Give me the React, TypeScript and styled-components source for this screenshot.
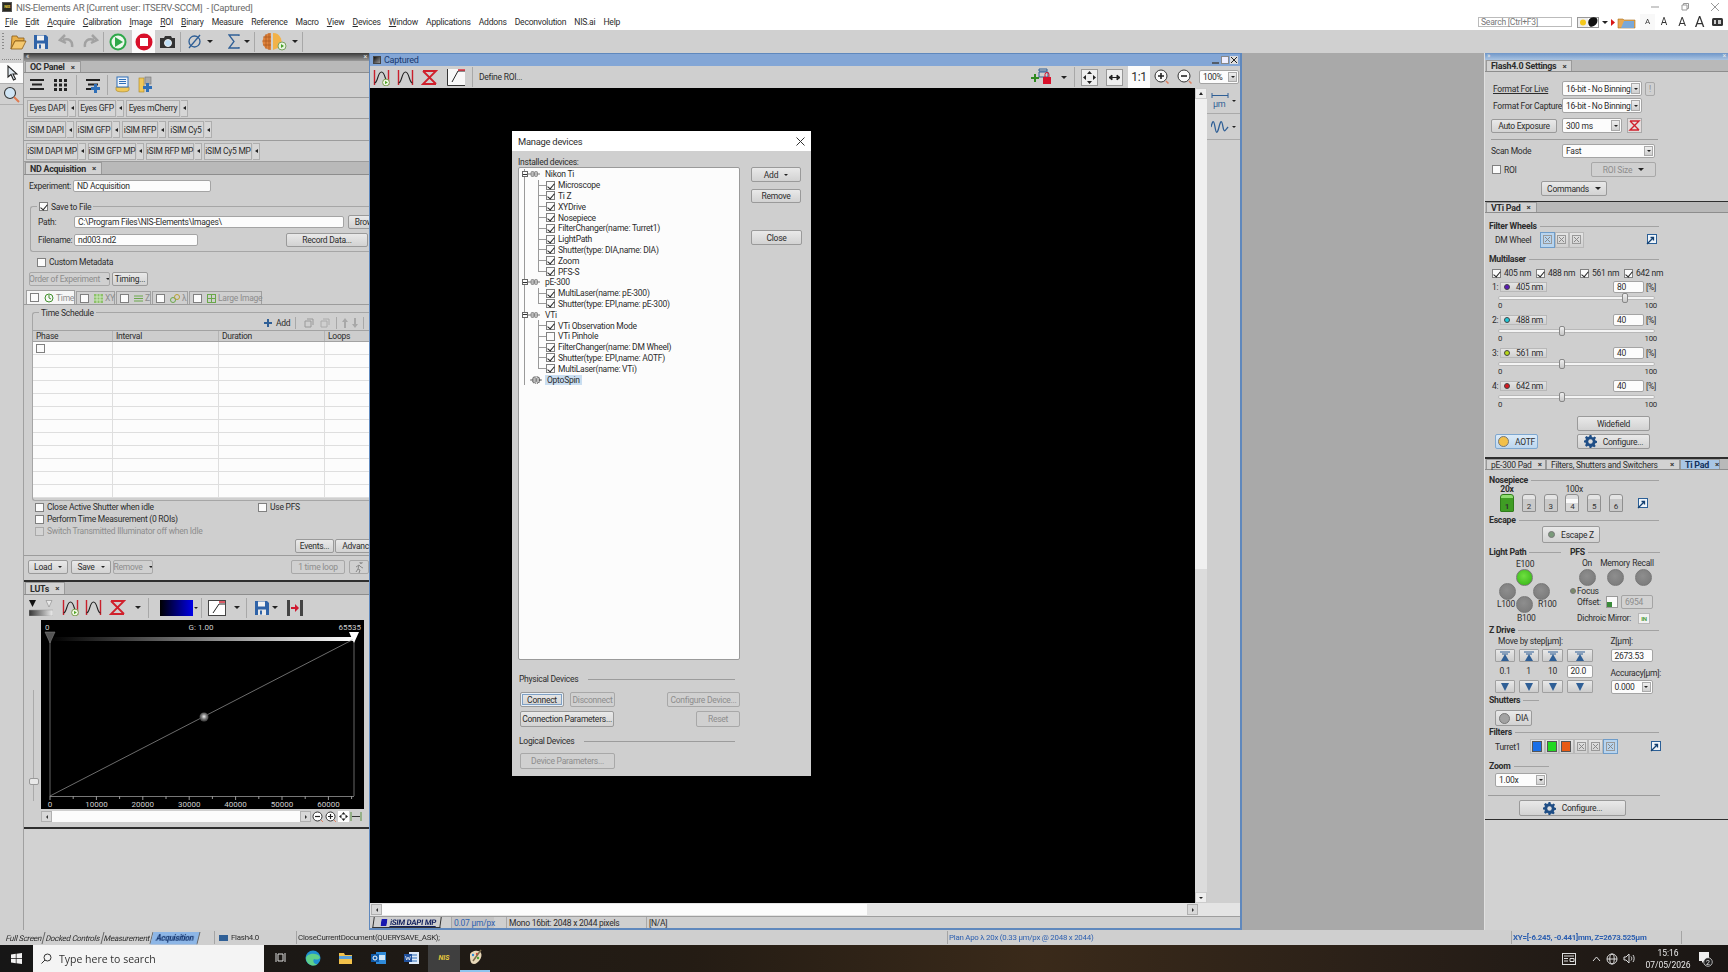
import React from "react"
import styled, { createGlobalStyle } from "styled-components"

const GlobalStyle = createGlobalStyle`
  html, body {
    margin: 0;
    width: 1728px;
    height: 972px;
    overflow: hidden;
    background: #cfcfcf;
    font-family: Roboto, "Liberation Sans", sans-serif;
    font-size: 8.5px;
    letter-spacing: -0.25px;
    color: #2c2c2c;
  }
  * { box-sizing: border-box; }
  button { font: inherit; color: inherit; padding: 0; letter-spacing: inherit; }
`

// ---------- basic controls ----------
const Page = styled.div`
  position: relative;
  width: 1728px;
  height: 972px;
  display: flex;
  flex-direction: column;
  overflow: hidden;
  filter: blur(0.3px);
`

const Row = styled.div<{ $h?: number; $pl?: number; $mt?: number; $gap?: number }>`
  display: flex;
  align-items: center;
  flex: none;
  height: ${(p) => p.$h ?? 12}px;
  padding-left: ${(p) => p.$pl ?? 0}px;
  margin-top: ${(p) => p.$mt ?? 0}px;
  gap: ${(p) => p.$gap ?? 0}px;
  white-space: nowrap;
`

const Label = styled.span<{ $w?: number; $ml?: number; $off?: boolean; $link?: boolean }>`
  flex: none;
  width: ${(p) => (p.$w ? `${p.$w}px` : "auto")};
  margin-left: ${(p) => p.$ml ?? 0}px;
  color: ${(p) => (p.$off ? "#8d8d8d" : "#2c2c2c")};
  text-decoration: ${(p) => (p.$link ? "underline" : "none")};
  white-space: nowrap;
`

const Gap = styled.span<{ $w: number }>`
  flex: none;
  width: ${(p) => p.$w}px;
`

const Btn = styled.button<{ $w: number; $h?: number; $ml?: number; $off?: boolean; $blue?: boolean; $focus?: boolean }>`
  flex: none;
  display: flex;
  align-items: center;
  justify-content: center;
  gap: 6px;
  width: ${(p) => p.$w}px;
  height: ${(p) => p.$h ?? 14}px;
  margin-left: ${(p) => p.$ml ?? 0}px;
  border: 1px solid ${(p) => (p.$blue ? "#7fa8d0" : p.$off ? "#a8a8a8" : "#9a9a9a")};
  border-radius: 2px;
  background: ${(p) =>
    p.$blue
      ? "linear-gradient(#dcebf8, #bcd6ee)"
      : p.$off
        ? "#d0d0d0"
        : "linear-gradient(#e9e9e9, #d2d2d2)"};
  color: ${(p) => (p.$off ? "#8d8d8d" : "#2c2c2c")};
  box-shadow: ${(p) => (p.$focus ? "inset 0 0 0 1px #e8f0f8, inset 0 0 0 2px #7fa0c4" : "none")};
  white-space: nowrap;
  overflow: hidden;
`

const Field = styled.div<{ $w: number; $h?: number; $ml?: number; $off?: boolean }>`
  flex: none;
  display: flex;
  align-items: center;
  width: ${(p) => p.$w}px;
  height: ${(p) => p.$h ?? 12}px;
  margin-left: ${(p) => p.$ml ?? 0}px;
  padding-left: 3px;
  border: 1px solid #a4a4a4;
  border-radius: 2px;
  background: ${(p) => (p.$off ? "#d2d2d2" : "#fcfcfc")};
  color: ${(p) => (p.$off ? "#8d8d8d" : "#2c2c2c")};
  white-space: nowrap;
  overflow: hidden;
`

const ComboBox = styled(Field)`
  justify-content: space-between;
  padding-right: 1px;
`

const ComboArrow = styled.span`
  flex: none;
  display: flex;
  align-items: center;
  justify-content: center;
  width: 9px;
  height: calc(100% - 2px);
  border: 1px solid #aaa;
  background: linear-gradient(#eee, #cfcfcf);
`

const Caret = styled.span<{ $ml?: number; $size?: number }>`
  flex: none;
  display: inline-block;
  width: 0;
  height: 0;
  margin-left: ${(p) => p.$ml ?? 0}px;
  border-left: ${(p) => p.$size ?? 3}px solid transparent;
  border-right: ${(p) => p.$size ?? 3}px solid transparent;
  border-top: ${(p) => p.$size ?? 3}px solid #222;
`

const Combo = ({ w, h, ml, value }: { w: number; h?: number; ml?: number; value: string }) => (
  <ComboBox $w={w} $h={h ?? 15} $ml={ml}>
    {value}
    <ComboArrow>
      <Caret $size={2.5} />
    </ComboArrow>
  </ComboBox>
)

const CheckBox = styled.span<{ $on?: boolean; $off?: boolean; $ml?: number }>`
  position: relative;
  flex: none;
  display: inline-block;
  width: 9px;
  height: 9px;
  margin-left: ${(p) => p.$ml ?? 0}px;
  margin-right: 3px;
  border: 1px solid ${(p) => (p.$off ? "#aaa" : "#808080")};
  background: ${(p) => (p.$off ? "#d4d4d4" : "#fbfbfb")};
  &::after {
    content: "";
    display: ${(p) => (p.$on ? "block" : "none")};
    position: absolute;
    left: 2px;
    top: 0;
    width: 3px;
    height: 6px;
    border: solid #222;
    border-width: 0 1.2px 1.2px 0;
    transform: rotate(40deg);
  }
`

const Heading = styled.div<{ $w: number; $ml?: number; $mt?: number }>`
  flex: none;
  display: flex;
  align-items: center;
  gap: 3px;
  width: ${(p) => p.$w}px;
  height: 10px;
  margin-left: ${(p) => p.$ml ?? 4}px;
  margin-top: ${(p) => p.$mt ?? 0}px;
  font-weight: 700;
  font-size: 8.7px;
  white-space: nowrap;
  &::after {
    content: "";
    flex: 1;
    height: 1px;
    background: #a2a2a2;
  }
`

const Rule = styled.div<{ $w: number; $ml: number; $mt: number }>`
  flex: none;
  width: ${(p) => p.$w}px;
  height: 1px;
  margin-left: ${(p) => p.$ml}px;
  margin-top: ${(p) => p.$mt}px;
  background: #9c9c9c;
`

const Ico = styled.svg<{ $ml?: number }>`
  flex: none;
  display: block;
  margin-left: ${(p) => p.$ml ?? 0}px;
`

// ---------- icons ----------
const CurveIcon = ({ kind, size = 17, ml }: { kind: "auto" | "peak" | "reset"; size?: number; ml?: number }) => (
  <Ico width={size} height={size} viewBox="0 0 17 17" $ml={ml} fill="none">
    {kind === "reset" ? (
      <path d="M2 2h13L2 15h13M2 2l13 13" stroke="#d0202c" strokeWidth="1.8" />
    ) : (
      <>
        <path d="M1.5 1v15M15.5 1v15" stroke="#c9202c" strokeWidth="1.4" />
        <path d="M1.5 14C5 14 4.5 3 8.5 3S12 14 15.5 14" stroke="#222" strokeWidth="1.1" />
        {kind === "auto" && <circle cx="13" cy="13.5" r="3.4" fill="#f4fbe8" stroke="#7a9b50" />}
        {kind === "auto" && <path d="M12 11.8v3.4l2.8-1.7z" fill="#52a52a" />}
      </>
    )}
  </Ico>
)

const Floppy = ({ size = 16, ml }: { size?: number; ml?: number }) => (
  <Ico width={size} height={size} viewBox="0 0 16 16" $ml={ml}>
    <path d="M1 1h12l2 2v12H1z" fill="#2f63a8" />
    <rect x="4" y="1.5" width="7" height="5" fill="#f2f2f2" />
    <rect x="4" y="9.5" width="8" height="5.5" fill="#e8e8e8" />
    <rect x="6" y="10.5" width="2" height="4" fill="#2f63a8" />
  </Ico>
)

const LinkIcon = ({ ml }: { ml?: number }) => (
  <Ico width={11} height={11} viewBox="0 0 11 11" $ml={ml}>
    <rect x="1.5" y=".5" width="9" height="9" fill="#eef4fa" stroke="#2b5f96" />
    <path d="M1 10l6-6M4.5 3.5H7.5V6.5" stroke="#123f70" strokeWidth="1.3" fill="none" />
  </Ico>
)

const Gear = ({ size = 13 }: { size?: number }) => (
  <Ico width={size} height={size} viewBox="0 0 14 14">
    <path
      d="M6 0h2l.4 2 1.3.6L11.5 1.500 13 3l-1.200 1.700.6 1.300 1.600.4v2l-1.800.4-.6 1.300 1 1.700-1.500 1.500-1.700-1-1.300.6L8 14H6l-.4-1.800-1.300-.6-1.700 1L1.100 11l1-1.700-.6-1.300L0 8V6l1.500-.4.600-1.300-1-1.700L2.600 1.100l1.700 1 1.300-.6z"
      fill="#1f4e86"
    />
    <circle cx="7" cy="7" r="2.400" fill="#dcdcdc" />
  </Ico>
)

const SmallX = styled.span`
  flex: none;
  display: inline-flex;
  align-items: center;
  justify-content: center;
  margin-left: 6px;
  font-size: 8px;
  font-weight: 700;
  color: #333;
`

// ---------- top bars ----------
const TitleBar = styled.div`
  flex: none;
  display: flex;
  align-items: center;
  height: 14px;
  padding-left: 2px;
  background: #fff;
  font-size: 9.6px;
  color: #6b6b6b;
`

const NisBadge = styled.span`
  flex: none;
  width: 10px;
  height: 10px;
  margin-right: 4px;
  background: #2a2a22;
  border: 1px solid #555;
  color: #e6c93c;
  font-size: 4px;
  font-weight: 700;
  line-height: 8px;
  text-align: center;
`

const WinControls = styled.div`
  display: flex;
  align-items: center;
  margin-left: auto;
  padding-right: 8px;
  gap: 20px;
`

const MenuBar = styled.div`
  flex: none;
  display: flex;
  align-items: center;
  height: 16px;
  padding-left: 5px;
  background: #fff;
  gap: 8.1px;
  font-size: 8.6px;
`

const SearchBox = styled.div`
  flex: none;
  display: flex;
  align-items: center;
  width: 94px;
  height: 10px;
  padding-left: 2px;
  border: 1px solid #bbb;
  color: #777;
  background: #fff;
`

const MenuTools = styled.div`
  display: flex;
  align-items: center;
  margin-left: auto;
`

const FontSize = styled.span<{ $s: number; $active?: boolean; $w: number }>`
  flex: none;
  display: flex;
  align-items: flex-end;
  justify-content: center;
  width: ${(p) => p.$w}px;
  height: 16px;
  font-size: ${(p) => p.$s}px;
  line-height: 14px;
  padding-bottom: 1px;
  background: ${(p) => (p.$active ? "#f8f8f8" : "transparent")};
  color: #333;
`

const MainToolbar = styled.div`
  flex: none;
  display: flex;
  align-items: center;
  height: 23px;
  background: #d0d0d0;
`

const Grip = styled.span`
  flex: none;
  width: 2px;
  height: 18px;
  margin: 0 3px 0 2px;
  background: repeating-linear-gradient(#8a8a8a 0 1px, transparent 1px 3px);
`

const ToolCell = styled.span<{ $w: number; $white?: boolean }>`
  flex: none;
  display: flex;
  align-items: center;
  justify-content: center;
  width: ${(p) => p.$w}px;
  height: 23px;
  background: ${(p) => (p.$white ? "#fbfbfb" : "transparent")};
`

const ToolSep = styled.span<{ $ml?: number; $h?: number }>`
  flex: none;
  width: 1px;
  height: ${(p) => p.$h ?? 20}px;
  margin-left: ${(p) => p.$ml ?? 0}px;
  background: #a8a8a8;
`

// ---------- layout columns ----------
const Workspace = styled.div`
  flex: none;
  display: flex;
  height: 877px;
`

const ToolStrip = styled.div`
  flex: none;
  display: flex;
  flex-direction: column;
  width: 24px;
  border-right: 1px solid #a0a0a0;
  background: #d0d0d0;
`

const StripDots = styled.div`
  flex: none;
  height: 7px;
  margin: 3px 2px 0;
  background: repeating-linear-gradient(90deg, #888 0 1px, transparent 1px 2px) center/100% 1px no-repeat;
`

const StripTool = styled.div<{ $white?: boolean }>`
  flex: none;
  display: flex;
  align-items: center;
  justify-content: center;
  height: 21px;
  background: ${(p) => (p.$white ? "#fbfbfb" : "transparent")};
  border-bottom: 1px solid #b0b0b0;
`

const Dock = styled.div<{ $w: number }>`
  flex: none;
  display: flex;
  flex-direction: column;
  width: ${(p) => p.$w}px;
  background: #cfcfcf;
  overflow: hidden;
`

const DockBar = styled.div<{ $blue?: boolean; $h?: number }>`
  flex: none;
  display: flex;
  align-items: center;
  justify-content: space-between;
  height: ${(p) => p.$h ?? 7}px;
  padding: 0 2px;
  background: ${(p) =>
    p.$blue ? "linear-gradient(#6f96c8, #aac4e2)" : "linear-gradient(#3a3a3a, #9a9a9a)"};
  color: #e8e8e8;
  font-size: 7px;
  line-height: 7px;
`

const TabStrip = styled.div<{ $h?: number }>`
  flex: none;
  display: flex;
  align-items: stretch;
  height: ${(p) => p.$h ?? 12}px;
  padding-left: 1px;
  background: #b9b9b9;
  border-bottom: 1px solid #8d8d8d;
`

const DockTab = styled.div<{ $w?: number; $blue?: boolean; $plain?: boolean }>`
  flex: none;
  display: flex;
  align-items: center;
  justify-content: ${(p) => (p.$plain ? "space-between" : "flex-start")};
  width: ${(p) => (p.$w ? `${p.$w}px` : "auto")};
  padding: 0 5px 0 4px;
  background: ${(p) => (p.$blue ? "#a9c6e6" : "#d2d2d2")};
  border: 1px solid #9a9a9a;
  border-bottom: 0;
  font-weight: ${(p) => (p.$plain ? 400 : 700)};
  font-size: ${(p) => (p.$plain ? 8.5 : 8.9)}px;
  white-space: nowrap;
  color: ${(p) => (p.$blue ? "#12315c" : "#2c2c2c")};
`

const Split = styled.div<{ $h?: number }>`
  flex: none;
  height: ${(p) => p.$h ?? 2}px;
  background: #2e2e2e;
`

const Pane = styled.div<{ $h: number }>`
  flex: none;
  display: flex;
  flex-direction: column;
  height: ${(p) => p.$h}px;
  overflow: hidden;
`

// ---------- OC panel ----------
const PanelTools = styled(Row)`
  border-bottom: 1px solid #9c9c9c;
`

const ChipRow = styled(Row)`
  border-bottom: 1px solid #9c9c9c;
  gap: 1px;
`

const ChipText = styled.span<{ $w: number }>`
  flex: none;
  display: flex;
  align-items: center;
  justify-content: center;
  width: ${(p) => p.$w}px;
  height: 17px;
  border: 1px solid #aeaeae;
  background: #d6d6d6;
`

const ChipArrow = styled.span`
  flex: none;
  display: flex;
  align-items: center;
  justify-content: center;
  width: 7px;
  height: 17px;
  border: 1px solid #aeaeae;
  border-left: 0;
  background: #d6d6d6;
  margin-right: 1px;
  &::before {
    content: "";
    border-top: 2.500px solid transparent;
    border-bottom: 2.500px solid transparent;
    border-right: 3px solid #222;
  }
`

const Chip = ({ w, text }: { w: number; text: string }) => (
  <>
    <ChipText $w={w}>{text}</ChipText>
    <ChipArrow />
  </>
)

// ---------- ND acquisition ----------
const Group = styled.div<{ $ml: number; $mt: number; $h: number }>`
  position: relative;
  flex: none;
  height: ${(p) => p.$h}px;
  margin-left: ${(p) => p.$ml}px;
  margin-top: ${(p) => p.$mt}px;
  border: 1px solid #a6a6a6;
  border-right: 0;
  border-radius: 3px 0 0 3px;
`

const Legend = styled.span`
  position: absolute;
  left: 6px;
  top: -6px;
  display: flex;
  align-items: center;
  height: 11px;
  padding: 0 2px;
  background: #cfcfcf;
`

const ModeTabs = styled(Row)`
  border-bottom: 1px solid #9c9c9c;
  align-items: flex-end;
  gap: 1px;
`

const ModeTab = styled.div<{ $w: number; $active?: boolean }>`
  flex: none;
  display: flex;
  align-items: center;
  gap: 2px;
  width: ${(p) => p.$w}px;
  height: ${(p) => (p.$active ? 14 : 13)}px;
  padding-left: 3px;
  border: 1px solid #a0a0a0;
  border-bottom: 0;
  background: ${(p) => (p.$active ? "#f6f6f6" : "#cfcfcf")};
  color: #8d8d8d;
`

const TableHead = styled.div`
  display: grid;
  grid-template-columns: 80px 106px 106px 60px;
  height: 12px;
  background: #cdcdcd;
  border-top: 1px solid #a2a2a2;
  border-bottom: 1px solid #a2a2a2;
`

const HeadCell = styled.div`
  display: flex;
  align-items: center;
  padding-left: 3px;
  border-right: 1px solid #b4b4b4;
`

const TableRow = styled.div`
  display: grid;
  grid-template-columns: 80px 106px 106px 60px;
  height: 13px;
  background: #fcfcfc;
  border-bottom: 1px solid #dedede;
`

const TableCell = styled.div`
  display: flex;
  align-items: center;
  padding-left: 3px;
  border-right: 1px solid #dedede;
`

// ---------- LUTs ----------
const Swatch = styled.span<{ $ml: number }>`
  flex: none;
  width: 33px;
  height: 16px;
  margin-left: ${(p) => p.$ml}px;
  background: linear-gradient(90deg, #000, #0000e8);
`

const ScrollBox = styled.span<{ $ml?: number }>`
  flex: none;
  display: flex;
  align-items: center;
  justify-content: center;
  width: 11px;
  height: 11px;
  margin-left: ${(p) => p.$ml ?? 0}px;
  background: #d8d8d8;
  border: 1px solid #b0b0b0;
`

const ArrowLeft = styled.span`
  border-top: 2px solid transparent;
  border-bottom: 2px solid transparent;
  border-right: 2.500px solid #333;
`

const ArrowRight = styled.span`
  border-top: 2px solid transparent;
  border-bottom: 2px solid transparent;
  border-left: 2.500px solid #333;
`

const WhiteTrack = styled.span<{ $w: number }>`
  flex: none;
  width: ${(p) => p.$w}px;
  height: 11px;
  background: #fcfcfc;
`

const LutSlider = styled.div`
  position: relative;
  flex: none;
  width: 17px;
  height: 189px;
  &::before {
    content: "";
    position: absolute;
    left: 9px;
    top: 70px;
    bottom: 8px;
    width: 1px;
    background: #aaa;
  }
  &::after {
    content: "";
    position: absolute;
    left: 5px;
    top: 158px;
    width: 8px;
    height: 5px;
    border: 1px solid #999;
    border-radius: 2px;
    background: #e8e8e8;
  }
`

const GraphSvg = styled(Ico)`
  background: #000;
  letter-spacing: 0;
`

const Graph = () => {
  const ticks = [0, 1, 2, 3, 4, 5, 6, 7, 8, 9, 10, 11, 12, 13]
  return (
    <GraphSvg width={323} height={189} viewBox="0 0 323 189">
      <defs>
        <linearGradient id="lutRamp" x1="0" x2="1" y1="0" y2="0">
          <stop offset="0" stopColor="#000" />
          <stop offset="1" stopColor="#fff" />
        </linearGradient>
        <radialGradient id="lutBall" cx=".5" cy=".45" r=".5">
          <stop offset="0" stopColor="#eee" />
          <stop offset=".6" stopColor="#777" />
          <stop offset="1" stopColor="#444" />
        </radialGradient>
      </defs>
      <rect x="9" y="17" width="304" height="4" fill="url(#lutRamp)" />
      <path d="M9 20V176M313 20V176" stroke="#666" />
      <path d="M9 176L313 19" stroke="#888" strokeWidth=".8" />
      <path d="M4 12h10l-5 11z" fill="#555" stroke="#888" strokeWidth=".5" />
      <path d="M308 12h10l-5 11z" fill="#fff" />
      <circle cx="163" cy="97" r="4.500" fill="url(#lutBall)" />
      <path d="M9 176.500H313" stroke="#777" />
      {ticks.map((t) => (
        <line key={t} x1={9 + t * 23.2} x2={9 + t * 23.2} y1={176} y2={t % 2 ? 179 : 180} stroke="#999" />
      ))}
      <g fill="#cfcfcf" fontSize="8" fontFamily="Roboto, sans-serif" textAnchor="middle">
        <text x="4" y="10" textAnchor="start">0</text>
        <text x="160" y="10">G: 1.00</text>
        <text x="320" y="10" textAnchor="end">65535</text>
        {["0", "10000", "20000", "30000", "40000", "50000", "60000"].map((l, i) => (
          <text key={l} x={9 + i * 46.4} y="187">{l}</text>
        ))}
      </g>
    </GraphSvg>
  )
}

// ---------- captured window ----------
const Mdi = styled.div`
  flex: none;
  display: flex;
  width: 1116px;
  background: #a9a9a9;
  border-right: 1px solid #e0e0e0;
`

const DocWindow = styled.div`
  flex: none;
  display: flex;
  flex-direction: column;
  width: 873px;
  border: 1px solid #5f88bd;
  border-width: 1px 2px 2px 1px;
  background: #cfcfcf;
`

const DocTitle = styled.div`
  flex: none;
  display: flex;
  align-items: center;
  height: 12px;
  padding-left: 3px;
  background: #83a6d6;
  color: #18396e;
  font-size: 9px;
`

const DocIcon = styled.span`
  flex: none;
  width: 8px;
  height: 8px;
  margin-right: 3px;
  background: linear-gradient(135deg, #111, #999);
  border: 1px solid #444;
`

const DocButtons = styled.div`
  display: flex;
  align-items: center;
  gap: 1px;
  margin-left: auto;
  padding-right: 2px;
`

const DocToolbar = styled.div`
  flex: none;
  display: flex;
  align-items: center;
  height: 22px;
  padding-left: 3px;
  background: #cfcfcf;
`

const OneToOne = styled(ToolCell)`
  margin-left: 5px;
  font-size: 12px;
`

const DocBody = styled.div`
  flex: 1;
  display: flex;
  min-height: 0;
`

const Canvas = styled.div`
  flex: 1;
  background: #000;
`

const VScroll = styled.div`
  flex: none;
  display: flex;
  flex-direction: column;
  justify-content: space-between;
  width: 12px;
  background: linear-gradient(#f0f0f0 0 59%, #dcdcdc 59%);
`

const VScrollEnd = styled.span`
  display: flex;
  align-items: center;
  justify-content: center;
  height: 11px;
  background: #eee;
  border: 1px solid #ccc;
`

const ArrowUp = styled.span`
  border-left: 2.500px solid transparent;
  border-right: 2.500px solid transparent;
  border-bottom: 3px solid #222;
`

const SideTools = styled.div`
  flex: none;
  display: flex;
  flex-direction: column;
  align-items: center;
  width: 33px;
  background: #cfcfcf;
`

const SideTool = styled.div`
  display: flex;
  align-items: center;
  justify-content: center;
  gap: 3px;
  width: 100%;
  height: 26px;
  border-bottom: 1px solid #aaa;
`

const HScrollRow = styled.div`
  flex: none;
  display: flex;
  align-items: center;
  height: 13px;
  padding-left: 1px;
  background: #e4e4e4;
`

const DocStatus = styled.div`
  flex: none;
  display: flex;
  align-items: center;
  height: 12px;
  background: #cfcfcf;
  border-top: 1px solid #9e9e9e;
`

const ImageTab = styled.div`
  flex: none;
  display: flex;
  align-items: center;
  gap: 3px;
  width: 68px;
  height: 11px;
  margin-left: 3px;
  padding-left: 7px;
  border: solid #333;
  border-width: 0 1px 1px 1px;
  transform: skewX(-8deg);
  font-weight: 700;
  font-size: 7.8px;
  color: #12205e;
  text-decoration: underline;
  white-space: nowrap;
`

const StatusCell = styled.div<{ $w: number; $ml?: number; $blue?: boolean }>`
  flex: none;
  display: flex;
  align-items: center;
  width: ${(p) => p.$w}px;
  height: 11px;
  margin-left: ${(p) => p.$ml ?? 0}px;
  padding-left: 2px;
  border-left: 1px solid #a8a8a8;
  background: ${(p) => (p.$blue ? "#c4c4c4" : "transparent")};
  color: ${(p) => (p.$blue ? "#2f62b0" : "#2c2c2c")};
  white-space: nowrap;
`

// ---------- dialog ----------
const Dialog = styled.div`
  position: absolute;
  left: 512px;
  top: 131px;
  display: flex;
  flex-direction: column;
  width: 299px;
  height: 645px;
  background: #cfcfcf;
`

const DialogTitle = styled.div`
  flex: none;
  display: flex;
  align-items: center;
  justify-content: space-between;
  height: 20px;
  padding: 0 6px;
  background: #fff;
  font-size: 9.4px;
`

const DialogMain = styled.div`
  flex: none;
  display: flex;
  height: 509px;
`

const DialogLeft = styled.div`
  flex: none;
  display: flex;
  flex-direction: column;
  width: 222px;
  margin-left: 6px;
  padding-top: 5px;
`

const DialogRight = styled.div`
  flex: none;
  display: flex;
  flex-direction: column;
  margin-left: 11px;
  padding-top: 16px;
`

const DialogBtn = styled(Btn)<{ $mt?: number }>`
  margin-top: ${(p) => p.$mt ?? 0}px;
`

const Tree = styled.div`
  flex: none;
  height: 493px;
  margin-top: 0;
  padding-top: 1px;
  border: 1px solid #9a9a9a;
  border-radius: 2px;
  background: #fcfcfc;
`

const TreeLine = styled.div<{ $child?: boolean; $last?: boolean }>`
  display: flex;
  align-items: center;
  height: 10.8px;
  padding-left: ${(p) => (p.$child ? 27 : 3)}px;
  white-space: nowrap;
  background-repeat: no-repeat;
  background-image: ${(p) =>
    p.$child
      ? `linear-gradient(#9a9a9a, #9a9a9a), linear-gradient(#9a9a9a, #9a9a9a), linear-gradient(#9a9a9a, #9a9a9a)`
      : `linear-gradient(#9a9a9a, #9a9a9a)`};
  background-size: ${(p) =>
    p.$child ? `1px 100%, 1px ${p.$last ? "50%" : "100%"}, 9px 1px` : `1px 100%`};
  background-position: ${(p) => (p.$child ? `5px 0, 19px 0, 19px 50%` : `5px 0`)};
`

const Expander = styled.span`
  flex: none;
  display: flex;
  align-items: center;
  justify-content: center;
  width: 6px;
  height: 6px;
  border: 1px solid #666;
  background: #fcfcfc;
  &::before {
    content: "";
    width: 4px;
    height: 1px;
    background: #333;
  }
`

const Selected = styled.span`
  padding: 0 2px;
  margin-left: -2px;
  background: #c9ddf0;
`

const DividerLabel = styled.div<{ $mt: number }>`
  flex: none;
  display: flex;
  align-items: center;
  width: 216px;
  height: 10px;
  margin: ${(p) => p.$mt}px 0 0 7px;
  &::after {
    content: "";
    flex: 1;
    height: 1px;
    margin-left: 10px;
    background: #9c9c9c;
  }
`

const LinkSvg = styled(Ico)`
  margin-right: 5px;
`

const DeviceLink = ({ spin }: { spin?: boolean }) => (
  <LinkSvg width={12} height={8} viewBox="0 0 12 8">
    <path d="M0 4h12" stroke="#777" />
    <rect x="3" y="1.500" width="3" height="5" rx="1" fill="#bbb" stroke="#666" strokeWidth=".6" />
    <rect x="6.500" y="1.500" width="3" height="5" rx="1" fill="#bbb" stroke="#666" strokeWidth=".6" />
    {spin && <circle cx="6" cy="4" r="3.800" fill="none" stroke="#444" strokeDasharray="1 1" />}
  </LinkSvg>
)

// ---------- right dock ----------
const LaserDot = styled.span<{ $c: string }>`
  flex: none;
  width: 6px;
  height: 6px;
  border-radius: 50%;
  background: ${(p) => p.$c};
  border: 1px solid #444;
`

const Track = styled.div`
  position: relative;
  flex: none;
  width: 157px;
  height: 4px;
  margin: 3px 0 0 13px;
  background: #f4f4f4;
  border: 1px solid #b8b8b8;
  border-radius: 2px;
`

const Thumb = styled.span`
  position: absolute;
  top: -4px;
  width: 6px;
  height: 10px;
  margin-left: -3px;
  border: 1px solid #888;
  border-radius: 2px;
  background: linear-gradient(#eee, #c8c8c8);
`

const Scale = styled.div`
  flex: none;
  display: flex;
  justify-content: space-between;
  width: 159px;
  height: 9px;
  margin: 1px 0 0 13px;
  font-size: 7.8px;
  line-height: 9px;
`

const FilterCell = styled.span<{ $sel?: boolean; $w?: number; $h?: number; $gap?: number }>`
  flex: none;
  display: flex;
  align-items: center;
  justify-content: center;
  gap: ${(p) => p.$gap ?? 0}px;
  width: ${(p) => p.$w ?? 14.6}px;
  height: ${(p) => p.$h ?? 15}px;
  border: 1px solid ${(p) => (p.$sel ? "#6f9cc8" : "#b8b8b8")};
  background: ${(p) => (p.$sel ? "#b8d4ee" : "linear-gradient(#e4e4e4, #d0d0d0)")};
`

const InBadge = styled(FilterCell)`
  background: #f2f2f2;
  color: #4a9a3a;
  font-size: 6px;
  font-weight: 700;
`

const EmptyMark = styled.span`
  flex: none;
  display: flex;
  align-items: center;
  justify-content: center;
  width: 9px;
  height: 9px;
  border: 1px solid #999;
`

const XGlyph = () => (
  <EmptyMark>
    <Ico width={7} height={7} viewBox="0 0 7 7"><path d="M1 1l5 5M6 1L1 6" stroke="#888" /></Ico>
  </EmptyMark>
)

const ColorMark = styled.span<{ $c: string }>`
  flex: none;
  width: 10px;
  height: 11px;
  border: 1px solid #555;
  background: ${(p) => p.$c};
`

const NoseGrid = styled.div`
  flex: none;
  display: grid;
  grid-template-columns: repeat(6, 14px);
  column-gap: 7.800px;
  margin-left: 15px;
`

const NoseTop = styled.span<{ $bold?: boolean }>`
  height: 9px;
  line-height: 9px;
  white-space: nowrap;
  font-weight: ${(p) => (p.$bold ? 700 : 400)};
  text-align: center;
`

const NoseBtn = styled.span<{ $on?: boolean; $white?: boolean }>`
  display: flex;
  align-items: flex-end;
  justify-content: center;
  height: 18px;
  border: 1px solid ${(p) => (p.$on ? "#2f7d1a" : "#8f8f8f")};
  border-radius: 3px 3px 1px 1px;
  background: ${(p) =>
    p.$on
      ? "linear-gradient(#8fdc70 0 20%, #3f9d24 20%)"
      : p.$white
        ? "linear-gradient(#ddd 0 25%, #fafafa 25% 50%, #d8d8d8 50%)"
        : "linear-gradient(#e4e4e4 0 25%, #c9c9c9 25%)"};
  font-size: 8px;
  line-height: 9px;
  font-weight: ${(p) => (p.$on ? 700 : 400)};
  color: #333;
`

const LightMap = styled.div`
  position: relative;
  flex: none;
  width: 85px;
  height: 69px;
`

const Lamp = styled.span<{ $on?: boolean; $size?: number; $c?: string; $mr?: number }>`
  flex: none;
  display: block;
  width: ${(p) => p.$size ?? 17}px;
  height: ${(p) => p.$size ?? 17}px;
  margin-right: ${(p) => p.$mr ?? 0}px;
  border-radius: 50%;
  border: 1px solid #777;
  background: ${(p) =>
    p.$c
      ? p.$c
      : p.$on
        ? "radial-gradient(circle at 45% 40%, #6fe040, #2fb012)"
        : "radial-gradient(circle at 45% 40%, #8e8e8e, #777)"};
`

const MapLamp = styled(Lamp)<{ $x: number; $y: number }>`
  position: absolute;
  left: ${(p) => p.$x}px;
  top: ${(p) => p.$y}px;
`

const MapLabel = styled.span<{ $x: number; $y: number }>`
  position: absolute;
  left: ${(p) => p.$x}px;
  top: ${(p) => p.$y}px;
  line-height: 10px;
`

const PfsCol = styled.div`
  flex: none;
  width: 28px;
  display: flex;
  flex-direction: column;
  align-items: center;
`

const PfsLabel = styled.span`
  height: 11px;
  line-height: 10px;
  white-space: nowrap;
`

const TopRow = styled(Row)`
  align-items: flex-start;
`

const Stack = styled.div<{ $ml?: number }>`
  flex: none;
  margin-left: ${(p) => p.$ml ?? 0}px;
`

const StepGrid = styled.div`
  flex: none;
  display: grid;
  grid-template-columns: 20px 20px 21px 26px;
  grid-template-rows: 13px 18px 13px;
  column-gap: 3.500px;
  align-items: center;
  justify-items: center;
  margin-left: 10px;
  margin-top: 3px;
`

const StepBtn = styled.span`
  display: flex;
  align-items: center;
  justify-content: center;
  width: 100%;
  height: 13px;
  border: 1px solid #a0a0a0;
  border-radius: 1px;
  background: linear-gradient(#e8e8e8, #cdcdcd);
`

const DockFill = styled.div`
  flex: 1;
  background: #d2d2d2;
`

// ---------- status + taskbar ----------
const StatusBar = styled.div`
  flex: none;
  display: flex;
  align-items: center;
  height: 15px;
  background: #cfcfcf;
  font-size: 7.9px;
`

const ModeBtn = styled.div<{ $w: number; $active?: boolean }>`
  flex: none;
  display: flex;
  align-items: center;
  justify-content: center;
  width: ${(p) => p.$w}px;
  height: 12px;
  border-right: 1px solid #666;
  transform: skewX(-14deg);
  background: ${(p) => (p.$active ? "#8db6e6" : "transparent")};
  font-weight: ${(p) => (p.$active ? 700 : 400)};
  color: ${(p) => (p.$active ? "#10306a" : "#2c2c2c")};
  white-space: nowrap;
`

const BarCell = styled.div<{ $w: number; $ml?: number; $blue?: boolean; $bold?: boolean }>`
  flex: none;
  display: flex;
  align-items: center;
  gap: 3px;
  width: ${(p) => p.$w}px;
  height: 13px;
  margin-left: ${(p) => p.$ml ?? 0}px;
  padding-left: 1px;
  border-left: 1px solid #a4a4a4;
  color: ${(p) => (p.$blue ? "#2c5fb0" : "#2c2c2c")};
  font-weight: ${(p) => (p.$bold ? 700 : 400)};
  white-space: nowrap;
`

const Taskbar = styled.div`
  flex: none;
  display: flex;
  align-items: center;
  height: 27px;
  background: linear-gradient(90deg, #161616 0, #241c14 40%, #3a2a1a 60%, #2a2018 80%, #1a1614 100%);
  color: #e8e8e8;
  letter-spacing: 0;
`

const StartCell = styled.div`
  flex: none;
  display: flex;
  align-items: center;
  justify-content: center;
  width: 33px;
`

const TaskSearch = styled.div`
  flex: none;
  display: flex;
  align-items: center;
  gap: 7px;
  width: 231px;
  height: 27px;
  padding-left: 8px;
  background: #f4f4f4;
  font-family: "Open Sans", sans-serif;
  font-size: 10.5px;
  color: #333;
`

const TaskCell = styled.div<{ $w: number; $active?: boolean; $mark?: boolean }>`
  flex: none;
  display: flex;
  align-items: center;
  justify-content: center;
  width: ${(p) => p.$w}px;
  height: 27px;
  background: ${(p) => (p.$active ? "#3f3f3f" : "transparent")};
  border-bottom: 2px solid ${(p) => (p.$mark ? "#8fc4ee" : "transparent")};
`

const NisTask = styled.span`
  color: #e6c93c;
  font-size: 7px;
  font-weight: 700;
  font-style: italic;
`

const Clock = styled.div`
  flex: none;
  display: flex;
  flex-direction: column;
  align-items: center;
  width: 50px;
  margin-left: 8px;
  font-size: 8.5px;
  line-height: 12px;
`

// ---------- data ----------
type TreeEntry = { t: string; root?: boolean; on?: boolean; last?: boolean }

const TREE: TreeEntry[] = [
  { t: "Nikon Ti", root: true },
  { t: "Microscope", on: true },
  { t: "Ti Z", on: true },
  { t: "XYDrive", on: true },
  { t: "Nosepiece", on: true },
  { t: "FilterChanger(name: Turret1)", on: true },
  { t: "LightPath", on: true },
  { t: "Shutter(type: DIA,name: DIA)", on: true },
  { t: "Zoom", on: true },
  { t: "PFS-S", on: true, last: true },
  { t: "pE-300", root: true },
  { t: "MultiLaser(name: pE-300)", on: true },
  { t: "Shutter(type: EPI,name: pE-300)", on: true, last: true },
  { t: "VTi", root: true },
  { t: "VTi Observation Mode", on: true },
  { t: "VTi Pinhole", on: false },
  { t: "FilterChanger(name: DM Wheel)", on: true },
  { t: "Shutter(type: EPI,name: AOTF)", on: true },
  { t: "MultiLaser(name: VTi)", on: true, last: true },
]

const LASERS = [
  { n: "1:", nm: "405 nm", c: "#5a18b8", v: 80, pos: 126 },
  { n: "2:", nm: "488 nm", c: "#20c8d8", v: 40, pos: 63 },
  { n: "3:", nm: "561 nm", c: "#b8d818", v: 40, pos: 63 },
  { n: "4:", nm: "642 nm", c: "#d81820", v: 40, pos: 63 },
]

const MENU: [string, string][] = [
  ["F", "ile"], ["E", "dit"], ["A", "cquire"], ["C", "alibration"], ["I", "mage"], ["R", "OI"],
  ["B", "inary"], ["", "Measure"], ["", "Reference"], ["", "Macro"], ["V", "iew"], ["D", "evices"],
  ["W", "indow"], ["", "Applications"], ["", "Addons"], ["", "Deconvolution"], ["", "NIS.ai"], ["", "Help"],
]

const UpBtn = () => (
  <StepBtn>
    <Ico width={12} height={10} viewBox="0 0 12 10">
      <path d="M1 1h10M3 3h6" stroke="#2f5f96" />
      <path d="M6 3l4 7H2z" fill="#2f5f96" />
    </Ico>
  </StepBtn>
)

const DownBtn = () => (
  <StepBtn>
    <Ico width={10} height={8} viewBox="0 0 10 8">
      <path d="M1 0h8L5 8z" fill="#2f5f96" />
    </Ico>
  </StepBtn>
)

// ---------- sections ----------
const TopBars = () => (
  <>
    <TitleBar>
      <NisBadge>NIS</NisBadge>
      NIS-Elements AR [Current user: ITSERV-SCCM]&nbsp; - [Captured]
      <WinControls>
        <Ico width={10} height={10} viewBox="0 0 10 10"><path d="M1 5h8" stroke="#999" /></Ico>
        <Ico width={10} height={10} viewBox="0 0 10 10" fill="none"><path d="M2 3h5v5H2zM3.500 3V1.500H8.500V6.500H7" stroke="#999" /></Ico>
        <Ico width={10} height={10} viewBox="0 0 10 10"><path d="M1 1l8 8M9 1L1 9" stroke="#999" /></Ico>
      </WinControls>
    </TitleBar>
    <MenuBar>
      {MENU.map(([u, rest]) => (
        <Label key={u + rest}>
          {u && <u>{u}</u>}
          {rest}
        </Label>
      ))}
      <MenuTools>
        <SearchBox>Search [Ctrl+F3]</SearchBox>
        <Ico width={22} height={11} viewBox="0 0 22 11" $ml={5}>
          <rect x=".5" y=".5" width="21" height="10" fill="#eee" stroke="#999" />
          <circle cx="6" cy="5.500" r="3" fill="#f4c81c" />
          <path d="M11 1h10v9H11z" fill="#fff" />
          <path d="M20 1.500a5 5 0 0 0-7 8 6 6 0 0 0 7-8z" fill="#111" />
        </Ico>
        <Caret $ml={3} />
        <Ico width={26} height={13} viewBox="0 0 26 13" $ml={3}>
          <path d="M0 3l4 3.500L0 10z" fill="#d81818" />
          <path d="M7 3h5l1 1h11v8H7z" fill="#e8a850" stroke="#a87020" strokeWidth=".6" />
          <path d="M13 5h10v7H10z" fill="#7aa8d8" />
        </Ico>
        <Gap $w={3} />
        <FontSize $s={8} $w={15} $active>A</FontSize>
        <FontSize $s={10} $w={18}>A</FontSize>
        <FontSize $s={12} $w={18}>A</FontSize>
        <FontSize $s={15} $w={17}>A</FontSize>
        <Ico width={11} height={8} viewBox="0 0 11 8" $ml={4}>
          <rect width="11" height="8" rx="1.500" fill="#333" />
          <path d="M2 2h2v4H2zM6 2h3v4H6z" fill="#ccc" />
        </Ico>
        <Gap $w={5} />
      </MenuTools>
    </MenuBar>
    <MainToolbar>
      <Grip />
      <ToolCell $w={22}>
        <Ico width={17} height={18} viewBox="0 0 17 18">
          <path d="M2 3h5l1 2h6v3H5L1 16z" fill="#e9b04a" stroke="#8a5a14" strokeWidth=".8" />
          <path d="M5 8h11l-4 8H1z" fill="#f4c870" stroke="#8a5a14" strokeWidth=".8" />
        </Ico>
      </ToolCell>
      <ToolCell $w={24}><Floppy size={16} /></ToolCell>
      <ToolCell $w={26}>
        <Ico width={16} height={15} viewBox="0 0 16 15" fill="none">
          <path d="M14 13c1-6-3-9-9-7M7 1L2 6l6 3" stroke="#a2a2a2" strokeWidth="2.500" />
        </Ico>
      </ToolCell>
      <ToolCell $w={24}>
        <Ico width={16} height={15} viewBox="0 0 16 15" fill="none">
          <path d="M2 13c-1-6 3-9 9-7M9 1l5 5-6 3" stroke="#a2a2a2" strokeWidth="2.500" />
        </Ico>
      </ToolCell>
      <ToolSep />
      <ToolCell $w={28}>
        <Ico width={18} height={18} viewBox="0 0 18 18">
          <circle cx="9" cy="9" r="8.500" fill="#2fa84a" />
          <circle cx="9" cy="9" r="6.500" fill="#eef8ee" />
          <path d="M6 4l8 5-8 5z" fill="#2fa84a" />
        </Ico>
      </ToolCell>
      <ToolCell $w={23} $white>
        <Ico width={18} height={18} viewBox="0 0 18 18">
          <circle cx="9" cy="9" r="8.500" fill="#d8102a" />
          <rect x="5" y="5" width="8" height="8" fill="#fff" />
        </Ico>
      </ToolCell>
      <ToolCell $w={25}>
        <Ico width={17} height={14} viewBox="0 0 17 14">
          <path d="M1 3h4l1-2h6l1 2h3v10H1z" fill="#333" />
          <circle cx="9" cy="8" r="3.500" fill="#bfe0f8" stroke="#eee" />
        </Ico>
      </ToolCell>
      <ToolSep />
      <ToolCell $w={26}>
        <Ico width={15} height={15} viewBox="0 0 15 15" fill="none">
          <circle cx="7.500" cy="7.500" r="5.500" stroke="#2f5f96" strokeWidth="1.300" />
          <path d="M13 1L2 14" stroke="#2f5f96" strokeWidth="1.300" />
        </Ico>
      </ToolCell>
      <Caret />
      <Gap $w={11} />
      <ToolCell $w={20}>
        <Ico width={12} height={15} viewBox="0 0 12 15" fill="none">
          <path d="M11 2V1H1l5 6.500L1 14h10v-1" stroke="#2f5f96" strokeWidth="1.300" />
        </Ico>
      </ToolCell>
      <Caret />
      <Gap $w={4} />
      <ToolSep />
      <ToolCell $w={37}>
        <Ico width={28} height={19} viewBox="0 0 28 19">
          <path d="M11 1a8.500 8.500 0 0 0 0 17z" fill="#e0843c" />
          <path d="M3 5h8M2.500 9h8.500M3 13h8M6 2v15M9 1v17" stroke="#a8551c" strokeWidth=".7" />
          <path d="M13 1a8.500 8.500 0 0 1 6 14.500l-6 2.500z" fill="#f2b24a" />
          <circle cx="22" cy="14" r="4" fill="#e8f6e0" stroke="#7aa060" />
          <path d="M21 12v4l3-2z" fill="#4aa02a" />
        </Ico>
      </ToolCell>
      <Caret />
      <Gap $w={4} />
      <ToolSep />
    </MainToolbar>
  </>
)

const LeftStrip = () => (
  <ToolStrip>
    <StripDots />
    <StripTool $white>
      <Ico width={12} height={16} viewBox="0 0 12 16">
        <path d="M2 1v11l3-2.500L7.500 15l2-1-2.500-5h4z" fill="#dfe8f0" stroke="#222" strokeWidth="1.100" />
      </Ico>
    </StripTool>
    <StripTool>
      <Ico width={17} height={17} viewBox="0 0 17 17" fill="none">
        <circle cx="7" cy="7" r="5.500" fill="#cfe4f4" stroke="#333" strokeWidth="1.100" />
        <path d="M11 11l5 5" stroke="#e07a50" strokeWidth="2" />
      </Ico>
    </StripTool>
  </ToolStrip>
)

const ListIcon = ({ kind }: { kind: "lines" | "grid" | "add" }) => (
  <Ico width={16} height={16} viewBox="0 0 16 16" $ml={kind === "lines" ? 5 : 8}>
    {kind === "grid" ? (
      <path d="M1 2h3v3H1zM6 2h3v3H6zM11 2h3v3h-3zM1 6.500h3v3H1zM6 6.500h3v3H6zM11 6.500h3v3h-3zM1 11h3v3H1zM6 11h3v3H6zM11 11h3v3h-3z" fill="#222" />
    ) : (
      <path d="M1 2h14v2H1zM3 6.500h10v2H3zM1 11h14v2H1z" fill="#222" />
    )}
    {kind === "add" && <path d="M9 7h3v3h3v3h-3v3H9v-3H6v-3h3z" fill="#2f6fb8" />}
  </Ico>
)

const OcPanel = () => (
  <>
    <DockBar $h={8}><span>«</span><span>×</span></DockBar>
    <TabStrip>
      <DockTab>OC Panel<SmallX>×</SmallX></DockTab>
    </TabStrip>
    <PanelTools $h={25}>
      <ListIcon kind="lines" />
      <ListIcon kind="grid" />
      <ToolSep $ml={7} />
      <ListIcon kind="add" />
      <ToolSep $ml={6} />
      <Ico width={17} height={18} viewBox="0 0 17 18" $ml={6}>
        <path d="M2 14c0 2.500 13 2.500 13 0V11H2z" fill="#f0c85a" stroke="#a88420" strokeWidth=".6" />
        <rect x="3" y="1" width="11" height="10" fill="#eef4fb" stroke="#2f6fb8" />
        <path d="M5 3.500h7M5 5.500h7M5 7.500h7" stroke="#2f6fb8" />
      </Ico>
      <Ico width={17} height={18} viewBox="0 0 17 18" $ml={6}>
        <rect x="2" y="2" width="5" height="14" fill="#f0c85a" stroke="#a88420" strokeWidth=".6" />
        <rect x="8" y="1" width="6" height="7" fill="#aaa" stroke="#777" strokeWidth=".6" />
        <path d="M9 7h3v3h3v3h-3v3H9v-3H6v-3h3z" fill="#2f6fb8" />
      </Ico>
    </PanelTools>
    <ChipRow $h={21} $pl={3}>
      <Chip w={41} text="Eyes DAPI" />
      <Chip w={38} text="Eyes GFP" />
      <Chip w={54} text="Eyes mCherry" />
    </ChipRow>
    <ChipRow $h={22} $pl={2}>
      <Chip w={40} text="iSIM DAPI" />
      <Chip w={36} text="iSIM GFP" />
      <Chip w={36} text="iSIM RFP" />
      <Chip w={36} text="iSIM Cy5" />
    </ChipRow>
    <ChipRow $h={21} $pl={2}>
      <Chip w={52} text="iSIM DAPI MP" />
      <Chip w={48} text="iSIM GFP MP" />
      <Chip w={48} text="iSIM RFP MP" />
      <Chip w={48} text="iSIM Cy5 MP" />
    </ChipRow>
  </>
)

const NdPane = () => (
  <Pane $h={405}>
    <Row $h={12} $pl={5} $mt={5}>
      <Label $w={44}>Experiment:</Label>
      <Field $w={138}>ND Acquisition</Field>
    </Row>
    <Group $ml={6} $mt={14} $h={46}>
      <Legend><CheckBox $on />Save to File</Legend>
      <Row $h={12} $pl={7} $mt={9}>
        <Label $w={36}>Path:</Label>
        <Field $w={270}>C:\Program Files\NIS-Elements\Images\</Field>
        <Btn $w={40} $ml={4}>Browse</Btn>
      </Row>
      <Row $h={14} $pl={7} $mt={5}>
        <Label $w={36}>Filename:</Label>
        <Field $w={124}>nd003.nd2</Field>
        <Btn $w={82} $ml={88}>Record Data...</Btn>
      </Row>
    </Group>
    <Row $h={10} $pl={13} $mt={5}>
      <CheckBox />Custom Metadata
    </Row>
    <Row $h={14} $pl={5} $mt={5}>
      <Btn $w={81} $off>Order of Experiment<Caret $size={2.500} /></Btn>
      <Btn $w={36} $ml={2}>Timing...</Btn>
    </Row>
    <ModeTabs $h={15} $pl={2} $mt={4}>
      <ModeTab $w={49} $active>
        <CheckBox />
        <Ico width={10} height={10} viewBox="0 0 10 10" fill="none">
          <circle cx="5" cy="5" r="4" stroke="#3f8f2a" />
          <path d="M5 2v3l2 1" stroke="#3f8f2a" />
        </Ico>
        Time
      </ModeTab>
      <ModeTab $w={39}>
        <CheckBox />
        <Ico width={9} height={9} viewBox="0 0 9 9">
          <path d="M0 0h9v9H0z" fill="#8cc06a" />
          <path d="M3 0v9M6 0v9M0 3h9M0 6h9" stroke="#cfe6c0" />
        </Ico>
        XY
      </ModeTab>
      <ModeTab $w={35}>
        <CheckBox />
        <Ico width={9} height={9} viewBox="0 0 9 9" fill="none">
          <path d="M0 2h9M0 4.500h9M0 7h9" stroke="#6aa84a" />
        </Ico>
        Z
      </ModeTab>
      <ModeTab $w={36}>
        <CheckBox />
        <Ico width={10} height={9} viewBox="0 0 10 9" fill="none">
          <circle cx="3" cy="6" r="2.500" stroke="#6aa84a" />
          <circle cx="7" cy="3" r="2.500" stroke="#b8a030" />
        </Ico>
        λ
      </ModeTab>
      <ModeTab $w={73}>
        <CheckBox />
        <Ico width={9} height={9} viewBox="0 0 9 9" fill="none">
          <rect x=".5" y=".5" width="8" height="8" stroke="#6aa84a" />
          <path d="M0 4.500h9M4.500 0v9" stroke="#6aa84a" />
        </Ico>
        Large Image
      </ModeTab>
    </ModeTabs>
    <Group $ml={8} $mt={7} $h={189}>
      <Legend>Time Schedule</Legend>
      <Row $h={15} $mt={2} $pl={231}>
        <Ico width={8} height={8} viewBox="0 0 8 8"><path d="M3 0h2v3h3v2H5v3H3V5H0V3h3z" fill="#2f5f96" /></Ico>
        <Label $ml={4}>Add</Label>
        <ToolSep $ml={5} $h={12} />
        <Ico width={10} height={10} viewBox="0 0 10 10" fill="none" $ml={8}><path d="M1 3h6v6H1zM3 1h6v6" stroke="#999" /></Ico>
        <Ico width={10} height={10} viewBox="0 0 10 10" fill="none" $ml={6}><path d="M1 3h6v6H1zM3 1h6v6" stroke="#aaa" /></Ico>
        <ToolSep $ml={6} $h={12} />
        <Ico width={6} height={10} viewBox="0 0 6 10" $ml={5}><path d="M3 0l3 4H4v6H2V4H0z" fill="#a8a8a8" /></Ico>
        <Ico width={6} height={10} viewBox="0 0 6 10" $ml={4}><path d="M3 10l3-4H4V0H2v6H0z" fill="#a8a8a8" /></Ico>
        <ToolSep $ml={5} $h={12} />
      </Row>
      <TableHead>
        <HeadCell>Phase</HeadCell>
        <HeadCell>Interval</HeadCell>
        <HeadCell>Duration</HeadCell>
        <HeadCell>Loops</HeadCell>
      </TableHead>
      {Array.from({ length: 12 }, (_, i) => (
        <TableRow key={i}>
          <TableCell>{i === 0 && <CheckBox />}</TableCell>
          <TableCell />
          <TableCell />
          <TableCell />
        </TableRow>
      ))}
    </Group>
    <Row $h={12} $pl={11} $mt={0}>
      <CheckBox /><Label $w={211}>Close Active Shutter when idle</Label>
      <CheckBox />Use PFS
    </Row>
    <Row $h={12} $pl={11}>
      <CheckBox />Perform Time Measurement (0 ROIs)
    </Row>
    <Row $h={12} $pl={11}>
      <CheckBox $off /><Label $off>Switch Transmitted Illuminator off when Idle</Label>
    </Row>
    <Row $h={14} $pl={271} $mt={2}>
      <Btn $w={39}>Events...</Btn>
      <Btn $w={50} $ml={1}>Advanced</Btn>
    </Row>
    <Rule $w={345} $ml={0} $mt={2} />
    <Row $h={14} $pl={4} $mt={4}>
      <Btn $w={40}>Load<Caret $size={2.500} /></Btn>
      <Btn $w={40} $ml={3}>Save<Caret $size={2.500} /></Btn>
      <Btn $w={40} $ml={2} $off>Remove<Caret $size={2.500} /></Btn>
      <Btn $w={54} $ml={138} $off>1 time loop</Btn>
      <Btn $w={20} $ml={4} $off>
        <Ico width={11} height={11} viewBox="0 0 11 11" fill="none">
          <path d="M7 1.500a1 1 0 1 1 .1 0M2 5l3-2 2 2 2 1M5 3L4 7l2 1-1 3M4 7L2 10" stroke="#888" />
        </Ico>
      </Btn>
    </Row>
  </Pane>
)

const LutPane = () => (
  <Pane $h={232}>
    <Row $h={25} $pl={5}>
      <Ico width={24} height={16} viewBox="0 0 24 16">
        <path d="M0 0h7L3.500 7z" fill="#111" />
        <path d="M17 .5h6L20 7z" fill="#e8e8e8" stroke="#888" strokeWidth=".6" />
        <defs>
          <linearGradient id="lutMini" x1="0" x2="1" y1="0" y2="0">
            <stop offset="0" stopColor="#333" /><stop offset="1" stopColor="#eee" />
          </linearGradient>
        </defs>
        <rect x="0" y="10" width="24" height="6" fill="url(#lutMini)" stroke="#999" strokeWidth=".5" />
      </Ico>
      <CurveIcon kind="auto" ml={9} />
      <CurveIcon kind="peak" ml={6} />
      <CurveIcon kind="reset" ml={7} />
      <Caret $ml={9} $size={3.500} />
      <ToolSep $ml={7} />
      <Swatch $ml={11} />
      <Caret $ml={1} $size={2.500} />
      <ToolSep $ml={3} />
      <Ico width={18} height={16} viewBox="0 0 18 16" $ml={6} fill="none">
        <rect x=".5" y=".5" width="17" height="15" fill="#fff" stroke="#444" />
        <path d="M5 13L11 4h6" stroke="#222" /><path d="M11 2h6" stroke="#d02030" strokeWidth="1.500" />
      </Ico>
      <Caret $ml={8} $size={3.500} />
      <ToolSep $ml={6} />
      <Floppy size={16} ml={7} />
      <Caret $ml={2} />
      <Ico width={16} height={16} viewBox="0 0 16 16" $ml={9}>
        <rect x="0" y="0" width="3" height="16" fill="#444" />
        <rect x="13" y="0" width="3" height="16" fill="#444" />
        <path d="M4 7h4V4l4 4-4 4V9H4z" fill="#d01830" />
      </Ico>
    </Row>
    <Row $h={189}>
      <LutSlider />
      <Graph />
    </Row>
    <Row $h={11} $pl={17} $mt={2}>
      <ScrollBox><ArrowLeft /></ScrollBox>
      <WhiteTrack $w={248} />
      <ScrollBox><ArrowRight /></ScrollBox>
      <Ico width={12} height={12} viewBox="0 0 12 12" fill="none" $ml={1}>
        <circle cx="5.500" cy="5.500" r="4.500" fill="#fff" stroke="#333" /><path d="M3 5.500h5" stroke="#222" strokeWidth="1.200" /><path d="M9 9l2 2" stroke="#e08060" />
      </Ico>
      <Ico width={12} height={12} viewBox="0 0 12 12" fill="none" $ml={1}>
        <circle cx="5.500" cy="5.500" r="4.500" fill="#fff" stroke="#333" /><path d="M3 5.500h5M5.500 3v5" stroke="#222" strokeWidth="1.200" /><path d="M9 9l2 2" stroke="#e08060" />
      </Ico>
      <Ico width={11} height={11} viewBox="0 0 11 11" $ml={1}>
        <rect width="11" height="11" fill="#fff" /><path d="M5.500 1l2 2.500h-4zM5.500 10l2-2.500h-4zM1 5.500L3.500 3.500v4zM10 5.500L7.500 3.500v4z" fill="#222" />
      </Ico>
      <Ico width={12} height={11} viewBox="0 0 12 11" $ml={1} fill="none">
        <path d="M1 1v9M11 1v9" stroke="#5a9040" /><path d="M2 5.500h8" stroke="#333" />
      </Ico>
    </Row>
  </Pane>
)

const CapturedWindow = () => (
  <DocWindow>
    <DocTitle>
      <DocIcon />Captured
      <DocButtons>
        <Ico width={8} height={8} viewBox="0 0 8 8"><path d="M0 7h7" stroke="#444" strokeWidth="1.500" /></Ico>
        <Ico width={8} height={8} viewBox="0 0 8 8"><rect x=".5" y=".5" width="7" height="7" fill="#eef" stroke="#888" /></Ico>
        <Ico width={8} height={8} viewBox="0 0 8 8"><rect width="8" height="8" fill="#ddd" /><path d="M1 1l6 6M7 1L1 7" stroke="#222" /></Ico>
      </DocButtons>
    </DocTitle>
    <DocToolbar>
      <CurveIcon kind="auto" />
      <CurveIcon kind="peak" ml={7} />
      <CurveIcon kind="reset" ml={7} />
      <Ico width={19} height={18} viewBox="0 0 19 18" $ml={9} fill="none">
        <path d="M.5 1v16.500H18" stroke="#333" />
        <rect x="1" y="1" width="17" height="16" fill="#f8f8f8" />
        <path d="M5 14L11 3h7" stroke="#222" /><path d="M11 2h7" stroke="#d02030" strokeWidth="1.500" />
      </Ico>
      <ToolSep $ml={6} />
      <Row $h={12} $gap={0}>
        <Label $ml={6} $w={44}>Define ROI...</Label>
      </Row>
      <Gap $w={508} />
      <Ico width={22} height={18} viewBox="0 0 22 18">
        <path d="M0 9h3V6h2v3h3v2H5v3H3v-3H0z" fill="#2f8a20" />
        <path d="M8 1h8v2H8zM8 4h9v5H8z" fill="none" stroke="#2f5f96" />
        <rect x="12" y="9" width="8" height="7" fill="#d8102a" />
        <path d="M14 9V6.500a2 2 0 0 1 4 0V9" fill="none" stroke="#d8102a" />
      </Ico>
      <Caret $ml={8} $size={3.500} />
      <ToolSep $ml={7} />
      <Ico width={17} height={17} viewBox="0 0 17 17" $ml={6}>
        <rect x=".5" y=".5" width="16" height="16" fill="#eee" stroke="#999" /><path d="M8.500 2l2.500 3H6zM8.500 15l2.500-3H6zM2 8.500L5 6v5zM15 8.500L12 6v5z" fill="#222" />
      </Ico>
      <Ico width={17} height={17} viewBox="0 0 17 17" $ml={8} fill="none">
        <rect x=".5" y=".5" width="16" height="16" fill="#eee" stroke="#999" /><path d="M3 8.500h11M3 8.500l3-2.500v5zM14 8.500l-3-2.500v5z" fill="#222" stroke="#222" />
      </Ico>
      <OneToOne $w={22} $white>1:1</OneToOne>
      <Ico width={16} height={16} viewBox="0 0 16 16" $ml={4} fill="none">
        <circle cx="7" cy="7" r="6" fill="#fafafa" stroke="#333" /><path d="M4 7h6M7 4v6" stroke="#222" strokeWidth="1.600" /><path d="M12 12l2.500 2.500" stroke="#e08060" strokeWidth="1.500" />
      </Ico>
      <Ico width={16} height={16} viewBox="0 0 16 16" $ml={7} fill="none">
        <circle cx="7" cy="7" r="6" fill="#fafafa" stroke="#333" /><path d="M4 7h6" stroke="#222" strokeWidth="1.600" /><path d="M12 12l2.500 2.500" stroke="#e08060" strokeWidth="1.500" />
      </Ico>
      <ComboBox $w={40} $h={14} $ml={6}>100%<ComboArrow><Caret $size={2.500} /></ComboArrow></ComboBox>
    </DocToolbar>
    <DocBody>
      <Canvas />
      <VScroll>
        <VScrollEnd><ArrowUp /></VScrollEnd>
        <VScrollEnd><Caret $size={2.500} /></VScrollEnd>
      </VScroll>
      <SideTools>
        <SideTool>
          <Ico width={18} height={18} viewBox="0 0 18 18" fill="none">
            <path d="M1 1v5M17 1v5M1 3.500h16" stroke="#2f5f96" />
            <text x="2" y="15" fontSize="9" fontFamily="Roboto, sans-serif" fill="#2f5f96">µm</text>
          </Ico>
          <Caret $size={2.500} />
        </SideTool>
        <SideTool>
          <Ico width={18} height={14} viewBox="0 0 18 14" fill="none">
            <path d="M0 7c2-8 3-6 4 0s2 8 4 0 3-6 4 0 2 4 5 0" stroke="#2f5f96" strokeWidth="1.300" />
          </Ico>
          <Caret $size={2.500} />
        </SideTool>
      </SideTools>
    </DocBody>
    <HScrollRow>
      <ScrollBox><ArrowLeft /></ScrollBox>
      <WhiteTrack $w={485} />
      <Gap $w={320} />
      <ScrollBox><ArrowRight /></ScrollBox>
    </HScrollRow>
    <DocStatus>
      <ImageTab>
        <Ico width={6} height={7} viewBox="0 0 6 7"><rect width="6" height="7" fill="#1818b0" /></Ico>
        iSIM DAPI MP
      </ImageTab>
      <StatusCell $w={43} $ml={10} $blue>0.07 µm/px</StatusCell>
      <StatusCell $w={140} $ml={12}>Mono 16bit: 2048 x 2044 pixels</StatusCell>
      <StatusCell $w={580}>[N/A]</StatusCell>
    </DocStatus>
  </DocWindow>
)

const FlashPane = () => (
  <Pane $h={129}>
    <Row $h={15} $pl={8} $mt={9}>
      <Label $w={69} $link>Format For Live</Label>
      <Combo w={80} value="16-bit - No Binning" />
      <Btn $w={10} $h={14} $ml={3} $off>!</Btn>
    </Row>
    <Row $h={15} $pl={8} $mt={2}>
      <Label $w={69}>Format For Capture</Label>
      <Combo w={80} value="16-bit - No Binning" />
    </Row>
    <Row $h={15} $pl={6} $mt={5}>
      <Btn $w={66} $h={14}>Auto Exposure</Btn>
      <Combo ml={5} w={60} value="300 ms" />
      <Ico width={15} height={15} viewBox="0 0 15 15" $ml={5} fill="none">
        <rect x=".5" y=".5" width="14" height="14" fill="#e4dcdc" stroke="#aaa" />
        <path d="M3 3h9L3 12h9M3 3l9 9" stroke="#d0202c" strokeWidth="1.400" />
      </Ico>
    </Row>
    <Rule $w={167} $ml={6} $mt={6} />
    <Row $h={14} $pl={6} $mt={4}>
      <Label $w={71}>Scan Mode</Label>
      <Combo w={93} h={14} value="Fast" />
    </Row>
    <Row $h={15} $pl={7} $mt={4}>
      <CheckBox /><Label $w={87}>ROI</Label>
      <Btn $w={65} $h={15} $off>ROI Size<Caret $size={3} /></Btn>
    </Row>
    <Row $h={15} $pl={56} $mt={4}>
      <Btn $w={66} $h={15}>Commands<Caret $size={3} /></Btn>
    </Row>
  </Pane>
)

const VtiPane = () => (
  <Pane $h={244}>
    <Heading $w={170} $mt={8}>Filter Wheels</Heading>
    <Row $h={17} $pl={10}>
      <Label $w={45}>DM Wheel</Label>
      <FilterCell $sel $h={16}><XGlyph /></FilterCell>
      <FilterCell $h={16}><XGlyph /></FilterCell>
      <FilterCell $h={16}><XGlyph /></FilterCell>
      <LinkIcon ml={62} />
    </Row>
    <Heading $w={170} $mt={6}>Multilaser</Heading>
    <Row $h={10} $pl={7} $mt={4}>
      {LASERS.map((l) => (
        <Row key={l.nm} $h={10} $pl={0}>
          <CheckBox $on /><Label $w={32}>{l.nm}</Label>
        </Row>
      ))}
    </Row>
    <Rule $w={0} $ml={0} $mt={1} />
    {LASERS.map((l) => (
      <Pane key={l.n} $h={33}>
        <Row $h={13} $pl={7}>
          <Label $w={8}>{l.n}</Label>
          <FilterCell $w={47} $h={10} $gap={6}>
            <LaserDot $c={l.c} />{l.nm}
          </FilterCell>
          <Field $w={31} $ml={66}>{l.v}</Field>
          <Label $ml={2}>[%]</Label>
        </Row>
        <Track>
          <Thumb style={{ left: l.pos }} />
        </Track>
        <Scale><span>0</span><span>100</span></Scale>
      </Pane>
    ))}
    <Row $h={15} $pl={92} $mt={4}>
      <Btn $w={73} $h={15}>Widefield</Btn>
    </Row>
    <Row $h={15} $pl={10} $mt={3}>
      <Btn $w={43} $h={15} $blue>
        <Lamp $size={11} $c="#f2c04a" />AOTF
      </Btn>
      <Btn $w={73} $h={15} $ml={39}><Gear />Configure...</Btn>
    </Row>
  </Pane>
)

const TiPane = () => (
  <Pane $h={349}>
    <Heading $w={170} $mt={5}>Nosepiece</Heading>
    <Row $h={9} $mt={0}>
      <NoseGrid>
        <NoseTop $bold>20x</NoseTop><NoseTop /><NoseTop /><NoseTop>100x</NoseTop><NoseTop /><NoseTop />
      </NoseGrid>
    </Row>
    <Row $h={18}>
      <NoseGrid>
        <NoseBtn $on>1</NoseBtn>
        <NoseBtn>2</NoseBtn>
        <NoseBtn>3</NoseBtn>
        <NoseBtn $white>4</NoseBtn>
        <NoseBtn>5</NoseBtn>
        <NoseBtn>6</NoseBtn>
      </NoseGrid>
      <LinkIcon ml={14} />
    </Row>
    <Heading $w={170} $mt={3}>Escape</Heading>
    <Row $h={17} $pl={57} $mt={1}>
      <Btn $w={58} $h={17}>
        <Lamp $size={7} $c="#7a9a7a" />Escape Z
      </Btn>
    </Row>
    <Row $h={10} $mt={4}>
      <Heading $w={72}>Light Path</Heading>
      <Heading $w={90} $ml={9}>PFS</Heading>
    </Row>
    <TopRow $h={69}>
      <LightMap>
        <MapLabel $x={31} $y={2}>E100</MapLabel>
        <MapLamp $on $x={31} $y={12} />
        <MapLamp $x={14} $y={26} />
        <MapLamp $x={48} $y={26} />
        <MapLamp $x={31} $y={39} />
        <MapLabel $x={12} $y={42}>L100</MapLabel>
        <MapLabel $x={53} $y={42}>R100</MapLabel>
        <MapLabel $x={32} $y={56}>B100</MapLabel>
      </LightMap>
      <Stack>
        <TopRow $h={28} $pl={3} $mt={1}>
          <PfsCol><PfsLabel>On</PfsLabel><Lamp /></PfsCol>
          <PfsCol><PfsLabel>Memory</PfsLabel><Lamp /></PfsCol>
          <PfsCol><PfsLabel>Recall</PfsLabel><Lamp /></PfsCol>
        </TopRow>
        <Row $h={9}>
          <Lamp $size={6} $c="#7a8a6a" $mr={1} />Focus
        </Row>
        <Row $h={14} $pl={7}>
          <Label $w={29}>Offset:</Label>
          <Ico width={12} height={12} viewBox="0 0 12 12">
            <rect x=".5" y=".5" width="11" height="11" fill="#fafafa" stroke="#999" />
            <path d="M1 6h5v5H1z" fill="#3a8a3a" />
          </Ico>
          <Field $w={32} $h={14} $ml={3} $off>6954</Field>
        </Row>
        <Row $h={14} $pl={7} $mt={2}>
          <Label $w={61}>Dichroic Mirror:</Label>
          <InBadge $w={12} $h={11}>IN</InBadge>
        </Row>
      </Stack>
    </TopRow>
    <Heading $w={170} $mt={-1}>Z Drive</Heading>
    <TopRow $h={57}>
      <Stack>
        <Row $h={11} $pl={13}>Move by step[µm]:</Row>
        <StepGrid>
          <UpBtn /><UpBtn /><UpBtn /><UpBtn />
          <span>0.1</span><span>1</span><span>10</span>
          <Field $w={26} $h={13}>20.0</Field>
          <DownBtn /><DownBtn /><DownBtn /><DownBtn />
        </StepGrid>
      </Stack>
      <Stack $ml={18}>
        <Row $h={11}>Z[µm]:</Row>
        <Row $h={13} $mt={3}><Field $w={42} $h={13}>2673.53</Field></Row>
        <Row $h={11} $mt={5}>Accuracy[µm]:</Row>
        <Row $h={14} $mt={2}>
          <ComboBox $w={42} $h={14}>0.000<ComboArrow><Caret $size={2.500} /></ComboArrow></ComboBox>
        </Row>
      </Stack>
    </TopRow>
    <Heading $w={50} $mt={3}>Shutters</Heading>
    <Row $h={16} $pl={10} $mt={5}>
      <Btn $w={37} $h={16}>
        <Lamp $size={11} $c="#a2a2a2" />DIA
      </Btn>
    </Row>
    <Heading $w={170} $mt={1}>Filters</Heading>
    <Row $h={15} $pl={10} $mt={2}>
      <Label $w={35}>Turret1</Label>
      <FilterCell><ColorMark $c="#1a6fe8" /></FilterCell>
      <FilterCell><ColorMark $c="#22d822" /></FilterCell>
      <FilterCell><ColorMark $c="#e85a14" /></FilterCell>
      <FilterCell><XGlyph /></FilterCell>
      <FilterCell><XGlyph /></FilterCell>
      <FilterCell $sel><XGlyph /></FilterCell>
      <LinkIcon ml={32} />
    </Row>
    <Heading $w={60} $mt={7}>Zoom</Heading>
    <Row $h={14} $pl={10} $mt={2}>
      <Combo w={52} h={14} value="1.00x" />
    </Row>
    <Rule $w={172} $ml={3} $mt={8} />
    <Row $h={16} $pl={34} $mt={4}>
      <Btn $w={107} $h={16}><Gear />Configure...</Btn>
    </Row>
  </Pane>
)

const DeviceDialog = () => (
  <Dialog>
    <DialogTitle>
      Manage devices
      <Ico width={9} height={9} viewBox="0 0 9 9"><path d="M.5.5l8 8M8.500.5l-8 8" stroke="#333" /></Ico>
    </DialogTitle>
    <DialogMain>
      <DialogLeft>
        <Row $h={11}>Installed devices:</Row>
        <Tree>
          {TREE.map((n) =>
            n.root ? (
              <TreeLine key={n.t}>
                <Expander />
                <DeviceLink />
                {n.t}
              </TreeLine>
            ) : (
              <TreeLine key={n.t} $child $last={n.last}>
                <CheckBox $on={n.on} />
                {n.t}
              </TreeLine>
            ),
          )}
          <TreeLine>
            <Gap $w={8} />
            <DeviceLink spin />
            <Selected>OptoSpin</Selected>
          </TreeLine>
        </Tree>
      </DialogLeft>
      <DialogRight>
        <DialogBtn $w={50} $h={15}>Add<Caret $size={2.500} /></DialogBtn>
        <DialogBtn $w={50} $mt={7}>Remove</DialogBtn>
        <DialogBtn $w={51} $h={15} $mt={27}>Close</DialogBtn>
      </DialogRight>
    </DialogMain>
    <DividerLabel $mt={14}>Physical Devices</DividerLabel>
    <Row $h={15} $pl={8} $mt={8}>
      <Btn $w={44} $h={15} $focus>Connect</Btn>
      <Btn $w={45} $h={15} $ml={6} $off>Disconnect</Btn>
      <Btn $w={73} $h={15} $ml={52} $off>Configure Device...</Btn>
    </Row>
    <Row $h={16} $pl={8} $mt={4}>
      <Btn $w={94} $h={16}>Connection Parameters...</Btn>
      <Btn $w={44} $h={16} $ml={82} $off>Reset</Btn>
    </Row>
    <DividerLabel $mt={9}>Logical Devices</DividerLabel>
    <Row $h={16} $pl={8} $mt={7}>
      <Btn $w={95} $h={16} $off>Device Parameters...</Btn>
    </Row>
  </Dialog>
)

const BottomBars = () => (
  <>
    <StatusBar>
      <Gap $w={5} />
      <ModeBtn $w={39}>Full Screen</ModeBtn>
      <ModeBtn $w={59}>Docked Controls</ModeBtn>
      <ModeBtn $w={49}>Measurement</ModeBtn>
      <ModeBtn $w={47} $active>Acquisition</ModeBtn>
      <BarCell $w={82} $ml={15}>
        <Ico width={9} height={6} viewBox="0 0 9 6" $ml={3}><rect width="9" height="6" fill="#2f5f96" /></Ico>
        Flash4.0
      </BarCell>
      <BarCell $w={651}>CloseCurrentDocument(QUERYSAVE_ASK);</BarCell>
      <BarCell $w={564} $blue>Plan Apo λ 20x (0.33 µm/px @ 2048 x 2044)</BarCell>
      <BarCell $w={170} $blue $bold>XY=[-6.245, -0.441]mm, Z=2673.525µm</BarCell>
      <BarCell $w={46} />
    </StatusBar>
    <Taskbar>
      <StartCell>
        <Ico width={11} height={11} viewBox="0 0 11 11">
          <path d="M0 1.500L4.800 .8v4.400H0zM5.500.7L11 0v5.200H5.500zM0 5.900h4.800v4.300L0 9.500zM5.500 5.900H11V11l-5.500-.8z" fill="#f2f2f2" />
        </Ico>
      </StartCell>
      <TaskSearch>
        <Ico width={11} height={11} viewBox="0 0 11 11" fill="none">
          <circle cx="6.500" cy="4.500" r="3.500" stroke="#333" /><path d="M4 7l-3.500 3.500" stroke="#333" />
        </Ico>
        Type here to search
      </TaskSearch>
      <TaskCell $w={32}>
        <Ico width={11} height={11} viewBox="0 0 11 11" fill="none"><path d="M3 2h5v7H3zM1 1v9M10 1v9" stroke="#ddd" /></Ico>
      </TaskCell>
      <TaskCell $w={33}>
        <Ico width={16} height={16} viewBox="0 0 16 16">
          <circle cx="8" cy="8" r="7.500" fill="#1f8fd0" />
          <path d="M1 8c1-5 11-6 14-1 0 3-4 3-6 2-2 3 1 6 4 5a7.500 7.500 0 0 1-12-6z" fill="#5fd08a" />
        </Ico>
      </TaskCell>
      <TaskCell $w={33}>
        <Ico width={15} height={14} viewBox="0 0 15 14">
          <path d="M1 2h5l1 2h7v9H1z" fill="#f2c14a" /><rect x="1" y="5" width="13" height="3" fill="#5aa0d8" />
        </Ico>
      </TaskCell>
      <TaskCell $w={33}>
        <Ico width={15} height={14} viewBox="0 0 15 14">
          <rect x="5" y="1" width="10" height="12" fill="#2f8ad8" /><rect x="8" y="4" width="6" height="5" fill="#cfe6f8" />
          <rect x="0" y="3" width="8" height="8" fill="#0f5aa8" /><circle cx="4" cy="7" r="2" fill="none" stroke="#fff" />
        </Ico>
      </TaskCell>
      <TaskCell $w={33}>
        <Ico width={15} height={14} viewBox="0 0 15 14">
          <rect x="5" y="1" width="10" height="12" fill="#dfeaf8" /><path d="M7 4h6M7 7h6M7 10h6" stroke="#2f6fb8" />
          <rect x="0" y="3" width="8" height="8" fill="#1f4f9a" /><path d="M1.500 5l1.200 4 1.300-3 1.300 3 1.200-4" fill="none" stroke="#fff" strokeWidth=".7" />
        </Ico>
      </TaskCell>
      <TaskCell $w={32} $active>
        <NisTask>NIS</NisTask>
      </TaskCell>
      <TaskCell $w={30} $mark>
        <Ico width={16} height={17} viewBox="0 0 16 17">
          <path d="M3 6c0-4 9-6 11-2s-3 11-7 11S3 10 3 6z" fill="#e8d8b8" />
          <circle cx="6" cy="6" r="1.200" fill="#2f8ad8" /><circle cx="10" cy="5" r="1.200" fill="#e04a3a" /><circle cx="11" cy="9" r="1.200" fill="#4aa83a" />
          <path d="M14 1L6 12" stroke="#7a6a4a" strokeWidth="1.500" />
        </Ico>
      </TaskCell>
      <Gap $w={1072} />
      <Ico width={14} height={12} viewBox="0 0 14 12" fill="none">
        <rect x=".5" y=".5" width="13" height="11" stroke="#ddd" /><path d="M2 3h10M2 5.500h4M2 8h4M8 5.500h4v3H8z" stroke="#ddd" />
      </Ico>
      <Ico width={9} height={6} viewBox="0 0 9 6" fill="none" $ml={16}><path d="M1 5l3.500-4L8 5" stroke="#ddd" /></Ico>
      <Ico width={12} height={12} viewBox="0 0 12 12" fill="none" $ml={5}>
        <circle cx="6" cy="6" r="5" stroke="#ddd" /><ellipse cx="6" cy="6" rx="2.200" ry="5" stroke="#ddd" /><path d="M1 6h10" stroke="#ddd" />
      </Ico>
      <Ico width={12} height={11} viewBox="0 0 12 11" fill="none" $ml={5}>
        <path d="M1 4v3h2l3 3V1L3 4z" stroke="#ddd" /><path d="M8 3.500c1 1 1 3 0 4M10 2c1.500 2 1.500 5 0 7" stroke="#ddd" />
      </Ico>
      <Clock><span>15:16</span><span>07/05/2026</span></Clock>
      <Ico width={15} height={16} viewBox="0 0 15 16" $ml={5}>
        <path d="M1 1h10v9H6l-2 2v-2H1z" fill="#eee" />
        <circle cx="10" cy="11" r="4.300" fill="#222" stroke="#eee" strokeWidth=".7" />
        <text x="10" y="13.500" fontSize="7" fill="#eee" textAnchor="middle" fontFamily="Roboto, sans-serif">2</text>
      </Ico>
    </Taskbar>
  </>
)

export default function App() {
  return (
    <Page>
      <GlobalStyle />
      <TopBars />
      <Workspace>
        <LeftStrip />
        <Dock $w={345}>
          <OcPanel />
          <TabStrip $h={13}>
            <DockTab>ND Acquisition<SmallX>×</SmallX></DockTab>
          </TabStrip>
          <NdPane />
          <Split />
          <TabStrip $h={13}>
            <DockTab>LUTs<SmallX>×</SmallX></DockTab>
          </TabStrip>
          <LutPane />
          <Split />
          <DockFill />
        </Dock>
        <Mdi>
          <CapturedWindow />
        </Mdi>
        <Dock $w={243}>
          <DockBar $blue><span>»</span><span>×</span></DockBar>
          <TabStrip>
            <DockTab>Flash4.0 Settings<SmallX>×</SmallX></DockTab>
          </TabStrip>
          <FlashPane />
          <Split $h={1} />
          <TabStrip $h={11}>
            <DockTab>VTi Pad<SmallX>×</SmallX></DockTab>
          </TabStrip>
          <VtiPane />
          <Split />
          <TabStrip $h={11}>
            <DockTab $w={60} $plain>pE-300 Pad<SmallX>×</SmallX></DockTab>
            <DockTab $w={134} $plain>Filters, Shutters and Switchers<SmallX>×</SmallX></DockTab>
            <DockTab $w={40} $blue>Ti Pad<SmallX>×</SmallX></DockTab>
          </TabStrip>
          <TiPane />
          <Split $h={1} />
          <DockFill />
        </Dock>
      </Workspace>
      <BottomBars />
      <DeviceDialog />
    </Page>
  )
}
